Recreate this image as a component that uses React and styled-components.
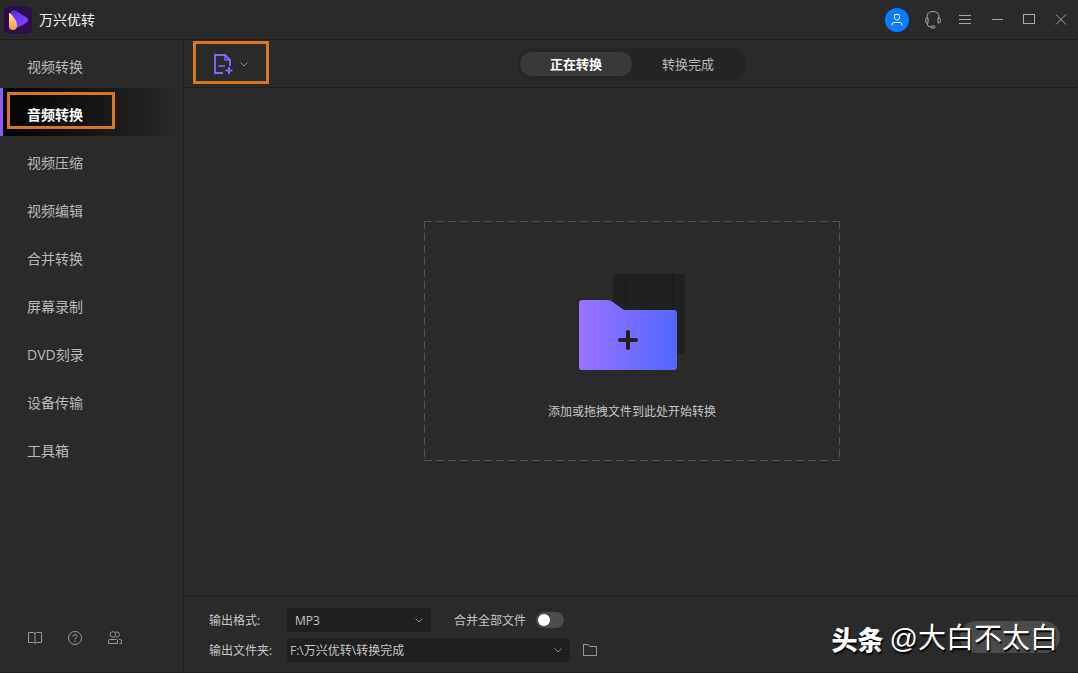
import React, { useState } from 'react';
import styled, { createGlobalStyle } from 'styled-components';

const GlobalStyle = createGlobalStyle`
  * {
    box-sizing: border-box;
  }

  body {
    margin: 0;
    background-color: #2a2a2a;
  }

  body, button, input, select {
    font-family: "Open Sans", "Noto Sans CJK SC", sans-serif;
  }

  button {
    padding: 0;
    border: none;
    color: inherit;
    background: none;
    cursor: pointer;
  }

  svg {
    display: block;
  }
`;

const Window = styled.div`
  display: flex;
  flex-direction: column;
  min-height: 100vh;
  color: #c4c4c4;
  background-color: #2a2a2a;
  border-bottom: 1px solid #1f1f1f;
`;

const TitleBar = styled.header`
  display: flex;
  align-items: center;
  height: 40px;
  padding: 0 1px 0 4px;
  border-bottom: 1px solid #202020;
`;

const AppName = styled.h1`
  flex: 1;
  margin: 0 0 0 7px;
  font-size: 14px;
  font-weight: 400;
  line-height: 20px;
  color: #f0f0f0;
`;

const TitleButton = styled.button`
  display: flex;
  align-items: center;
  justify-content: center;
  width: 32px;
  height: 24px;
  color: #a8a8a8;
`;

const AccountButton = styled.button`
  display: flex;
  align-items: center;
  justify-content: center;
  width: 24px;
  height: 24px;
  margin-right: 8px;
  border-radius: 50%;
  color: white;
  background-color: #0a7cff;
`;

const Body = styled.div`
  display: flex;
  flex: 1;
`;

const Sidebar = styled.aside`
  display: flex;
  flex-direction: column;
  justify-content: space-between;
  width: 184px;
  border-right: 1px solid #202020;
`;

const NavItem = styled.button`
  position: relative;
  display: block;
  width: 100%;
  height: 48px;
  padding: 6px 0 0 24px;
  text-align: left;
  font-size: 14px;
  line-height: 20px;
  font-weight: ${(props) => (props.$active ? 700 : 400)};
  color: ${(props) => (props.$active ? '#ffffff' : '#b8b8b8')};
  border-left: 3px solid ${(props) => (props.$active ? '#8b5cf6' : 'transparent')};
  background: ${(props) => (props.$active ? 'linear-gradient(90deg, #020202, #2a2a2a) padding-box' : 'none')};
`;

const Marker = styled.span`
  position: absolute;
  border: 3px solid #d9761f;
  pointer-events: none;
`;

const NavMarker = styled(Marker)`
  top: 4px;
  left: 4px;
  width: 108px;
  height: 37px;
`;

const AddMarker = styled(Marker)`
  inset: 0;
`;

const SidebarTools = styled.div`
  display: flex;
  gap: 24px;
  padding: 0 0 26px 27px;
  color: #969696;
`;

const Main = styled.main`
  display: flex;
  flex: 1;
  flex-direction: column;
  min-width: 0;
`;

const Toolbar = styled.div`
  display: grid;
  grid-template-columns: 1fr auto 1fr;
  align-items: center;
  height: 48px;
  padding: 0 7px 0 9px;
  border-bottom: 1px solid #202020;
`;

const AddGroup = styled.div`
  position: relative;
  display: flex;
  align-items: center;
  align-self: start;
  gap: 6px;
  width: 76px;
  height: 43px;
  margin-top: 1px;
  padding: 3px 0 0 20px;
`;

const MoreButton = styled.button`
  color: #8c8c8c;
`;

const Tabs = styled.div`
  display: flex;
  height: 32px;
  padding: 4px 3px;
  border-radius: 16px;
  background-color: #252525;
`;

const Tab = styled.button`
  width: 112px;
  height: 24px;
  border-radius: 12px;
  font-size: 13px;
  line-height: 24px;
  font-weight: ${(props) => (props.$active ? 700 : 400)};
  color: ${(props) => (props.$active ? '#ffffff' : '#b8b8b8')};
  background-color: ${(props) => (props.$active ? '#393939' : 'transparent')};
`;

const Workspace = styled.div`
  display: flex;
  flex: 1;
  align-items: center;
  justify-content: center;
  padding: 0 0 2px 2px;
`;

const dash = (angle) => `repeating-linear-gradient(${angle}, #505050 0 8px, transparent 8px 12px)`;

const DropZone = styled.button`
  display: flex;
  flex-direction: column;
  align-items: center;
  gap: 33px;
  width: 416px;
  height: 240px;
  padding-top: 53px;
  background:
    ${dash('90deg')} top / 100% 1px no-repeat,
    ${dash('90deg')} bottom / 100% 1px no-repeat,
    ${dash('180deg')} left / 1px 100% no-repeat,
    ${dash('180deg')} right / 1px 100% no-repeat;
`;

const DropHint = styled.span`
  font-size: 12px;
  line-height: 18px;
  color: #c4c4c4;
`;

const Footer = styled.footer`
  display: flex;
  align-items: center;
  justify-content: space-between;
  height: 77px;
  padding: 0 18px 0 25px;
  border-top: 1px solid #202020;
`;

const Fields = styled.div`
  display: grid;
  gap: 6px;
  padding-top: 1px;
`;

const Field = styled.div`
  display: flex;
  align-items: center;
  height: 24px;
`;

const FieldLabel = styled.label`
  width: 78px;
  padding-top: 2px;
  font-size: 12px;
  line-height: 24px;
`;

const SwitchLabel = styled(FieldLabel)`
  width: 82px;
  margin-left: 23px;
`;

const SelectBox = styled.div`
  display: grid;
  align-items: center;
  width: ${(props) => props.$width}px;
  height: 24px;
  color: #8c8c8c;
  border-radius: 3px;
  background-color: #202020;

  > * {
    grid-area: 1 / 1;
  }

  > svg {
    justify-self: end;
    margin-right: 7px;
    pointer-events: none;
  }
`;

const Select = styled.select`
  width: 100%;
  height: 24px;
  padding: 2px 24px 0 ${(props) => props.$inset}px;
  border: none;
  appearance: none;
  font-size: 12px;
  color: #c4c4c4;
  background: none;
`;

const Switch = styled.input`
  display: flex;
  align-items: center;
  width: 28px;
  height: 16px;
  margin: 0;
  padding: 0 2px;
  appearance: none;
  border-radius: 8px;
  background-color: #4c4c4c;
  cursor: pointer;

  &::before {
    content: '';
    width: 12px;
    height: 12px;
    border-radius: 50%;
    background-color: white;
  }

  &:checked {
    justify-content: flex-end;
    background-color: #7a5cff;
  }
`;

const FolderButton = styled.button`
  margin-left: 12px;
  color: #969696;
`;

const StartButton = styled.button`
  width: 100px;
  height: 32px;
  margin-top: 6px;
  border-radius: 16px;
  background-color: #4a4a4a;
`;

const Watermark = styled.div`
  position: absolute;
  right: 20px;
  bottom: 16px;
  display: flex;
  align-items: center;
  gap: 6px;
  font-family: "Liberation Sans", "Noto Sans CJK SC", sans-serif;
  font-size: 28px;
  line-height: 36px;
  color: white;
  text-shadow: 1px 2px 1px #000000;
  pointer-events: none;
`;

const WatermarkBrand = styled.strong`
  font-family: "Noto Sans CJK SC", sans-serif;
  font-size: 26px;
  font-weight: 900;
`;

const Icon = ({ size = 16, children, ...rest }) => (
  <svg width={size} height={size} viewBox={`0 0 ${size} ${size}`} fill="none" stroke="currentColor" {...rest}>
    {children}
  </svg>
);

const Logo = () => (
  <svg width="28" height="28" viewBox="0 0 28 28">
    <defs>
      <linearGradient id="logo-play" x1="0" y1="0" x2="1" y2="1">
        <stop offset="0" stopColor="#4a2be0" />
        <stop offset="0.5" stopColor="#6a3cff" />
        <stop offset="1" stopColor="#a03cf0" />
      </linearGradient>
      <linearGradient id="logo-drop" x1="0" y1="0" x2="0" y2="1">
        <stop offset="0" stopColor="#ffe0b0" />
        <stop offset="1" stopColor="#ff9a3c" />
      </linearGradient>
    </defs>
    <rect width="28" height="28" rx="6" fill="#2c0f48" />
    <path d="M7 6Q9 3 12 5L22 11Q26 14 22 17L13 22Q8 24 6 20Z" fill="url(#logo-play)" />
    <path d="M6 7Q13 14 13 19Q13 24 9 24Q5 24 5 20V8Q5 6 6 7Z" fill="url(#logo-drop)" />
  </svg>
);

const Chevron = () => (
  <Icon size={10}>
    <path d="M1.5 3.5L5 7L8.5 3.5" />
  </Icon>
);

const AddFileIcon = () => (
  <svg width="20" height="22" viewBox="0 0 20 22" fill="none" stroke="#8065ff" strokeWidth="2">
    <path d="M10 20H2V2H12L17 7V13" />
    <path d="M12 2V7H17M5.5 13H12" strokeWidth="1.5" />
    <path d="M16 14V21M12.5 17.5H19.5" />
  </svg>
);

const FolderArt = () => (
  <svg width="106" height="96" viewBox="0 0 106 96">
    <defs>
      <linearGradient id="folder">
        <stop offset="0" stopColor="#9b72ff" />
        <stop offset="1" stopColor="#5068ff" />
      </linearGradient>
    </defs>
    <rect x="34" width="72" height="80" rx="3" fill="#202020" />
    <path d="M46.5 1V40M93.5 1V40" stroke="#191919" />
    <path d="M3 26H29Q31 26 33 27.5L45 36H95Q98 36 98 39V93Q98 96 95 96H3Q0 96 0 93V29Q0 26 3 26Z" fill="url(#folder)" />
    <path d="M49 58V74M41 66H57" stroke="#202020" strokeWidth="4" strokeLinecap="round" />
  </svg>
);

const navItems = ['视频转换', '音频转换', '视频压缩', '视频编辑', '合并转换', '屏幕录制', 'DVD刻录', '设备传输', '工具箱'];
const tabs = ['正在转换', '转换完成'];

const App = () => {
  const [section, setSection] = useState('音频转换');
  const [tab, setTab] = useState('正在转换');
  const [merge, setMerge] = useState(false);

  return (
    <Window>
      <GlobalStyle />
      <TitleBar>
        <Logo />
        <AppName>万兴优转</AppName>
        <AccountButton aria-label="账户">
          <Icon>
            <path d="M5.5 3Q5.5 2.5 6 2.5H9.5Q10.5 2.5 10.5 3.5V6L9 8H7L5.5 6.5ZM3 13.5V12.5Q3 10.5 5 10.5H11Q13 10.5 13 12.5V13.5" />
          </Icon>
        </AccountButton>
        <TitleButton aria-label="客服">
          <Icon size={20}>
            <path d="M4 8V7Q4 1.5 10 1.5T16 7V8M5 8V13H4Q2.5 13 2.5 10.5T4 8ZM15 8V13H16Q17.5 13 17.5 10.5T16 8ZM4 13Q4 17 8 17" />
            <rect x="8" y="16" width="4" height="2" rx="1" />
          </Icon>
        </TitleButton>
        <TitleButton aria-label="菜单">
          <Icon>
            <path d="M2 3.5H14M2 7.5H14M2 11.5H14" />
          </Icon>
        </TitleButton>
        <TitleButton aria-label="最小化">
          <Icon>
            <path d="M3 7.5H14" />
          </Icon>
        </TitleButton>
        <TitleButton aria-label="最大化">
          <Icon>
            <rect x="2.5" y="2.5" width="11" height="9" />
          </Icon>
        </TitleButton>
        <TitleButton aria-label="关闭">
          <Icon>
            <path d="M3 2.5L13 12.5M13 2.5L3 12.5" />
          </Icon>
        </TitleButton>
      </TitleBar>
      <Body>
        <Sidebar>
          <nav>
            {navItems.map((item) => (
              <NavItem key={item} $active={item === section} onClick={() => setSection(item)}>
                {item}
                {item === section && <NavMarker />}
              </NavItem>
            ))}
          </nav>
          <SidebarTools>
            <button aria-label="教程">
              <Icon>
                <path d="M8 3.5V13M1.5 2.5H6.5Q8 2.5 8 4Q8 2.5 9.5 2.5H14.5V12.5H9.5L8 13.5L6.5 12.5H1.5Z" />
              </Icon>
            </button>
            <button aria-label="帮助">
              <Icon>
                <circle cx="8" cy="8" r="6.5" />
                <path d="M6 6.5Q6 4.5 8 4.5T10 6.3Q10 7.5 8 8.5V9.5M8 10.5V12" />
              </Icon>
            </button>
            <button aria-label="社区">
              <Icon>
                <circle cx="6" cy="4.5" r="2.8" />
                <path d="M9 2Q12.5 1.5 12.5 4.5T9 7.2M1.5 13.5V10.5Q1.5 9.5 2.5 9.5H9.5Q10.5 9.5 10.5 10.5V13.5ZM12 9.5H13Q14.5 9.5 14.5 11V13.5H12.5" />
              </Icon>
            </button>
          </SidebarTools>
        </Sidebar>
        <Main>
          <Toolbar>
            <AddGroup>
              <button aria-label="添加文件">
                <AddFileIcon />
              </button>
              <MoreButton aria-label="更多">
                <Chevron />
              </MoreButton>
              <AddMarker />
            </AddGroup>
            <Tabs>
              {tabs.map((item) => (
                <Tab key={item} $active={item === tab} onClick={() => setTab(item)}>
                  {item}
                </Tab>
              ))}
            </Tabs>
          </Toolbar>
          <Workspace>
            <DropZone>
              <FolderArt />
              <DropHint>添加或拖拽文件到此处开始转换</DropHint>
            </DropZone>
          </Workspace>
          <Footer>
            <Fields>
              <Field>
                <FieldLabel htmlFor="format">输出格式:</FieldLabel>
                <SelectBox $width={144}>
                  <Select id="format" $inset={8}>
                    <option>MP3</option>
                  </Select>
                  <Chevron />
                </SelectBox>
                <SwitchLabel htmlFor="merge">合并全部文件</SwitchLabel>
                <Switch id="merge" type="checkbox" checked={merge} onChange={(e) => setMerge(e.target.checked)} />
              </Field>
              <Field>
                <FieldLabel htmlFor="folder-path">输出文件夹:</FieldLabel>
                <SelectBox $width={283}>
                  <Select id="folder-path" $inset={3}>
                    <option>F:\万兴优转\转换完成</option>
                  </Select>
                  <Chevron />
                </SelectBox>
                <FolderButton aria-label="打开文件夹">
                  <Icon>
                    <path d="M1.5 2.5H6L7.5 4.5H14.5V13.5H1.5Z" />
                  </Icon>
                </FolderButton>
              </Field>
            </Fields>
            <StartButton aria-label="全部转换" />
          </Footer>
        </Main>
      </Body>
      <Watermark>
        <WatermarkBrand>头条</WatermarkBrand>
        <span>@大白不太白</span>
      </Watermark>
    </Window>
  );
};

export default App;
